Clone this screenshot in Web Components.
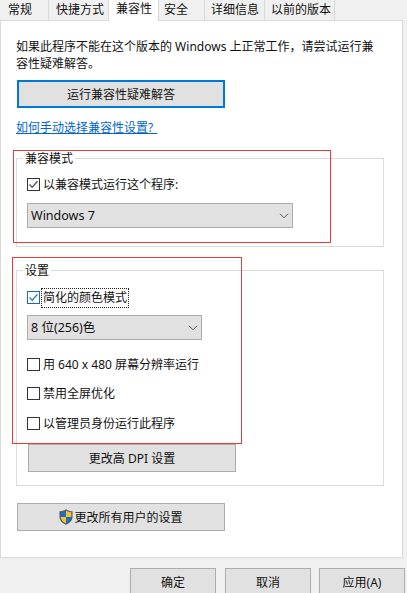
<!DOCTYPE html>
<html>
<head>
<meta charset="utf-8">
<style>
html, body { margin: 0; height: 593px; overflow: hidden; background: #f0f0f0; }
body { font: 12px/17px "Noto Sans", "Noto Sans CJK SC", sans-serif; color: #111; }
</style>
</head>
<body>
<win-dialog>
  <win-tabs>
    <win-tab style="width:40px;padding-left:5px">常规</win-tab>
    <win-tab style="width:52px;padding-left:7px">快捷方式</win-tab>
    <win-tab style="width:42px;padding-left:7px" active>兼容性</win-tab>
    <win-tab style="width:40px;padding-left:5px">安全</win-tab>
    <win-tab style="width:53px;padding-left:6px">详细信息</win-tab>
    <win-tab style="width:63px;padding-left:6px">以前的版本</win-tab>
  </win-tabs>
  <win-panel>
    <win-text>如果此程序不能在这个版本的 Windows 上正常工作，请尝试运行兼容性疑难解答。</win-text>
    <win-button style="margin:8px 0 0 1px" focused>运行兼容性疑难解答</win-button>
    <win-link style="margin-top:11px">如何手动选择兼容性设置<span style="letter-spacing:4px">?</span></win-link>
    <win-group label="兼容模式" style="margin-top:22px;padding-bottom:18px">
      <win-check checked style="margin-top:9px">以兼容模式运行这个程序:</win-check>
      <win-select style="margin-top:10px;width:266px">Windows 7</win-select>
    </win-group>
    <win-group label="设置" style="margin-top:23px;padding-bottom:13px">
      <win-check checked focused style="margin-top:10px">简化的颜色模式</win-check>
      <win-select style="margin-top:9px;width:175px">8 位(256)色</win-select>
      <win-check style="margin-top:16px">用 640 x 480 屏幕分辨率运行</win-check>
      <win-check style="margin-top:12px">禁用全屏优化</win-check>
      <win-check style="margin-top:13px">以管理员身份运行此程序</win-check>
      <win-button style="margin:12px 0 0 1px">更改高 DPI 设置</win-button>
    </win-group>
    <win-button style="margin:17px 0 0 1px" shield>更改所有用户的设置</win-button>
  </win-panel>
  <win-footer>
    <win-button small>确定</win-button>
    <win-button small>取消</win-button>
    <win-button small style="margin-left:-1px">应用(A)</win-button>
  </win-footer>
  <win-mark style="left:13px;top:150px;width:316px;height:91px"></win-mark>
  <win-mark style="left:12px;top:257px;width:228px;height:185px"></win-mark>
</win-dialog>

<script>
// small helper, every element just sets its shadow markup
class WinBase extends HTMLElement {
    constructor(){
        super();
        this.attachShadow({ mode: "open" });
    }
}

class WinDialog extends WinBase {
    connectedCallback(){
        this.shadowRoot.innerHTML = `
        <style>
        :host{ display: block; position: relative; width: 407px; height: 593px; overflow: hidden; }
        </style>
        <slot></slot>`;
    }
}

class WinTabs extends WinBase {
    connectedCallback(){
        this.shadowRoot.innerHTML = `
        <style>
        :host{ display: flex; height: 20px; padding-left: 3px; position: relative; z-index: 1; }
        </style>
        <slot></slot>`;
    }
}

class WinTab extends WinBase {
    connectedCallback(){
        let on = this.hasAttribute("active");
        this.shadowRoot.innerHTML = `
        <style>
        :host{
            display: block;
            flex: none;
            height: ${on ? 21 : 20}px;
            line-height: ${on ? 17 : 20}px;
            background: ${on ? "#fff" : "#f0f0f0"};
            border-right: 1px solid #d9d9d9;
        }
        </style>
        <slot></slot>`;
    }
}

class WinPanel extends WinBase {
    connectedCallback(){
        this.shadowRoot.innerHTML = `
        <style>
        :host{
            display: block;
            width: 403px;
            box-sizing: border-box;
            height: 538px;
            padding: 17px 17px 0 15px;
            background: #fff;
            border: 1px solid #d9d9d9;
        }
        </style>
        <slot></slot>`;
    }
}

class WinText extends WinBase {
    connectedCallback(){
        this.shadowRoot.innerHTML = `
        <style>
        :host{ display: block; width: 362px; line-height: 17px; }
        </style>
        <slot></slot>`;
    }
}

class WinLink extends WinBase {
    connectedCallback(){
        this.shadowRoot.innerHTML = `
        <style>
        :host{ display: block; color: #0066cc; text-decoration: underline; }
        </style>
        <slot></slot>`;
    }
}

class WinButton extends WinBase {
    connectedCallback(){
        let focused = this.hasAttribute("focused");
        let shield = this.hasAttribute("shield");
        let small = this.hasAttribute("small");
        this.shadowRoot.innerHTML = `
        <style>
        :host{
            display: flex;
            align-items: center;
            justify-content: center;
            box-sizing: border-box;
            width: ${small ? 86 : 208}px;
            height: 28px;
            flex: none;
            background: #e1e1e1;
            border: ${focused ? "2px solid #0078d7" : "1px solid #adadad"};
        }
        svg{ display: block; margin-right: 1px; }
        </style>
        ${shield ? `<svg width="14" height="16" viewBox="0 0 14 16">
            <path d="M7 .2C5 1.600 3 2.200.5 2.300v5.500c0 3.700 2.700 6.400 6.500 8 3.800-1.600 6.500-4.300 6.500-8V2.300C11 2.200 9 1.600 7 .2z" fill="#4d5660"/>
            <path d="M7 1.400C5.300 2.500 3.500 3 1.600 3.200V8H7z" fill="#1a6fc9"/>
            <path d="M7 1.400c1.700 1.100 3.500 1.600 5.400 1.800V8H7z" fill="#f8c22a"/>
            <path d="M1.600 8c.2 3 2.400 5.100 5.400 6.500V8z" fill="#f8c22a"/>
            <path d="M12.400 8c-.2 3-2.400 5.100-5.400 6.500V8z" fill="#1a6fc9"/>
        </svg>` : ""}
        <slot></slot>`;
    }
}

class WinGroup extends WinBase {
    connectedCallback(){
        this.shadowRoot.innerHTML = `
        <style>
        :host{
            display: block;
            box-sizing: border-box;
            width: 368px;
            padding: 0 10px;
            border: 1px solid #dcdcdc;
        }
        #label{
            display: table;
            margin: -9px 0 0 -4px;
            padding: 0 2px;
            background: #fff;
        }
        </style>
        <div id="label">${this.getAttribute("label")}</div>
        <slot></slot>`;
    }
}

class WinCheck extends WinBase {
    connectedCallback(){
        let checked = this.hasAttribute("checked");
        let focused = this.hasAttribute("focused");
        let col = focused ? "#1a6cb5" : "#333";
        this.shadowRoot.innerHTML = `
        <style>
        :host{ display: flex; align-items: center; height: 17px; }
        #box{
            width: 13px;
            height: 13px;
            box-sizing: border-box;
            border: 1px solid ${col};
            background: #fff;
            flex: none;
            margin-right: 2px;
        }
        #box svg{ display: block; }
        #txt{ padding: 0 1px; outline: ${focused ? "1px dotted #222" : "0"}; height: 18px; }
        </style>
        <div id="box">${checked ? `<svg width="11" height="11" viewBox="0 0 11 11"><path d="M1.500 5.500 4.200 8.300 9.500 2.300" fill="none" stroke="${focused ? "#2f7fc8" : "#555"}" stroke-width="1.300"/></svg>` : ""}</div>
        <div id="txt"><slot></slot></div>`;
    }
}

class WinSelect extends WinBase {
    connectedCallback(){
        this.shadowRoot.innerHTML = `
        <style>
        :host{
            display: flex;
            align-items: center;
            justify-content: space-between;
            box-sizing: border-box;
            height: 25px;
            padding: 0 3px 0 3px;
            background: #e1e1e1;
            border: 1px solid #adadad;
            font-size: 12.5px;
        }
        svg{ display: block; }
        </style>
        <span><slot></slot></span>
        <svg width="10" height="6" viewBox="0 0 10 6"><path d="M1 .8 5 4.800 9 .8" fill="none" stroke="#555" stroke-width="1"/></svg>`;
    }
}

class WinFooter extends WinBase {
    connectedCallback(){
        this.shadowRoot.innerHTML = `
        <style>
        :host{ display: flex; gap: 9px; padding: 10px 0 0 130px; }
        </style>
        <slot></slot>`;
    }
}

// red note boxes drawn over the dialog
class WinMark extends WinBase {
    connectedCallback(){
        this.shadowRoot.innerHTML = `
        <style>
        :host{ display: block; position: absolute; border: 1px solid #ea3a3a; }
        </style>`;
    }
}

customElements.define("win-dialog", WinDialog);
customElements.define("win-tabs", WinTabs);
customElements.define("win-tab", WinTab);
customElements.define("win-panel", WinPanel);
customElements.define("win-text", WinText);
customElements.define("win-link", WinLink);
customElements.define("win-button", WinButton);
customElements.define("win-group", WinGroup);
customElements.define("win-check", WinCheck);
customElements.define("win-select", WinSelect);
customElements.define("win-footer", WinFooter);
customElements.define("win-mark", WinMark);
</script>
</body>
</html>
